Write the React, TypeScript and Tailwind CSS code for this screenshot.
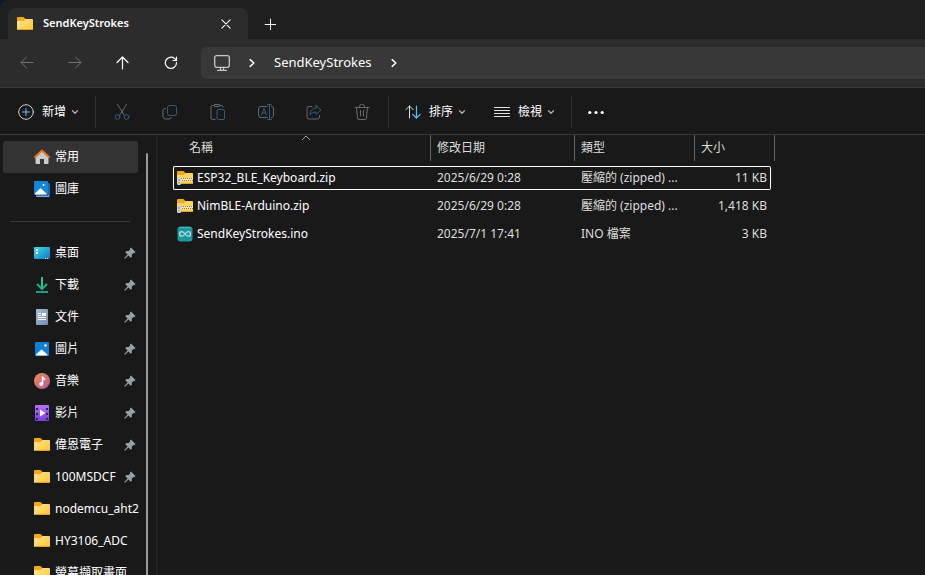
import type { ReactNode } from "react";

type IconProps = { className?: string };

/* ---------- Command icons ---------- */

function Svg({ children, className = "size-4" }: { children: ReactNode; className?: string }) {
  return (
    <svg
      viewBox="0 0 16 16"
      className={`shrink-0 ${className}`}
      fill="none"
      stroke="currentColor"
      strokeLinecap="round"
      strokeLinejoin="round"
      aria-hidden="true"
    >
      {children}
    </svg>
  );
}

function ChevronDown() {
  return (
    <Svg className="size-2 text-[#b4b4b4]">
      <path d="M3 5.5l5 5 5-5" strokeWidth="2.4" />
    </Svg>
  );
}

function ChevronRight() {
  return (
    <Svg className="size-3">
      <path d="M5.5 3.5L10.5 8l-5 4.500" strokeWidth="1.9" />
    </Svg>
  );
}

function CutIcon() {
  return (
    <Svg>
      <path d="M3.500 .5l7 11M12.500 .5l-7 11" stroke="#6b6b6b" />
      <circle cx="3.500" cy="13" r="2.400" stroke="#2f5f7e" />
      <circle cx="12.500" cy="13" r="2.400" stroke="#2f5f7e" />
    </Svg>
  );
}

function CopyIcon() {
  return (
    <Svg>
      <path d="M3.500 4.500H3a2 2 0 0 0-2 2v6A2.500 2.500 0 0 0 3.500 15h4a1.500 1.500 0 0 0 1.500-1.500" stroke="#6b6b6b" />
      <rect x="5.500" y="1.500" width="9" height="10" rx="2" stroke="#2f5f7e" />
    </Svg>
  );
}

function PasteIcon() {
  return (
    <Svg>
      <path d="M4 1.500H2.500A1.500 1.500 0 0 0 1 3v11a1.500 1.500 0 0 0 1.500 1.500H5M10 1.500h1.500A1.500 1.500 0 0 1 13 3" stroke="#6b6b6b" />
      <rect x="4" y=".5" width="6" height="2" rx="1" stroke="#6b6b6b" />
      <rect x="7" y="5.500" width="7.500" height="10" rx="1.500" stroke="#2f5f7e" />
    </Svg>
  );
}

function RenameIcon() {
  return (
    <Svg>
      <path d="M9 2.500H3A2.500 2.500 0 0 0 .5 5v6A2.500 2.500 0 0 0 3 13.500h6M13.500 2.500a2 2 0 0 1 2 2.500v6a2 2 0 0 1-2 2.500" stroke="#6b6b6b" />
      <path d="M3.500 11L6 4.500 8.500 11M4.500 9h3M11.500 .5v15M9.500 .5h4M9.500 15.500h4" stroke="#2f5f7e" />
    </Svg>
  );
}

function ShareIcon() {
  return (
    <Svg>
      <path d="M6 2.500H3a2 2 0 0 0-2 2v8.500a2 2 0 0 0 2 2h8.500a2 2 0 0 0 2-2v-1.500" stroke="#6b6b6b" />
      <path d="M10 1.500l5 4.500-5 4.500V8C7 8 5 9 4 11c0-4 2-6.500 6-7z" stroke="#2f5f7e" />
    </Svg>
  );
}

function DeleteIcon() {
  return (
    <Svg>
      <path d="M1 3.500h14M5.500 3.500V2.500a2 2 0 0 1 2-2h1a2 2 0 0 1 2 2v1M2.500 3.500l1 10.500a1.500 1.500 0 0 0 1.500 1.500h6a1.500 1.500 0 0 0 1.500-1.500l1-10.500M6.500 6.500v5.500M9.500 6.500v5.500" stroke="#6b6b6b" />
    </Svg>
  );
}

/* ---------- Folder and file icons ---------- */

function FolderIcon({ className = "size-4" }: IconProps) {
  return (
    <svg viewBox="0 0 16 16" className={`shrink-0 ${className}`} aria-hidden="true">
      <defs>
        <linearGradient id="folder" x1="0" y1="0" x2="1" y2="1">
          <stop offset="0" stopColor="#ffe69c" />
          <stop offset="1" stopColor="#ffc52f" />
        </linearGradient>
      </defs>
      <path d="M0 2a1 1 0 0 1 1-1h5.500l2 2v3H0z" fill="#f6a90c" />
      <path d="M0 6a1 1 0 0 1 1-1h5.800L8.500 3H15a1 1 0 0 1 1 1v9a1 1 0 0 1-1 1H1a1 1 0 0 1-1-1z" fill="url(#folder)" />
      <path d="M.5 13.500h15" stroke="#e3a322" />
    </svg>
  );
}

function ZipIcon() {
  return (
    <svg viewBox="0 0 16 16" className="size-4 shrink-0" aria-hidden="true">
      <path d="M0 2a1 1 0 0 1 1-1h5.500l2 2v3H0z" fill="#f6a90c" />
      <path d="M0 6a1 1 0 0 1 1-1h5.800L8.500 3H15a1 1 0 0 1 1 1v9a1 1 0 0 1-1 1H1a1 1 0 0 1-1-1z" fill="#ffd45c" />
      <path d="M4 13.500h11.500" stroke="#e3a322" />
      <path d="M3 8h13v3H3z" fill="#f3e6bd" />
      <path d="M4 8.500h12M5 10.500h11" stroke="#857a62" strokeDasharray="1 1" />
      <path d="M0 8h4v5.500a1.500 1.500 0 0 1-1.500 1.500h-1A1.500 1.500 0 0 1 0 13.500z" fill="#d7d7d7" />
      <path d="M2 9v2M2 12v1.500" stroke="#777" />
    </svg>
  );
}

function InoIcon() {
  return (
    <svg viewBox="0 0 16 16" className="size-4 shrink-0" aria-hidden="true">
      <rect x=".5" y=".5" width="15" height="15" rx="3" fill="#1f989c" />
      <path d="M2.500 1.500h11" stroke="#4cb9bb" strokeLinecap="round" />
      <path d="M8 8C6.800 6.400 6 5.600 4.800 5.600a2.300 2.300 0 0 0 0 4.600C6 10.200 6.800 9.600 8 8s2-2.400 3.200-2.400a2.300 2.300 0 0 1 0 4.600C10 10.200 9.200 9.600 8 8z" fill="none" stroke="#b5e3e3" strokeWidth="1.200" />
    </svg>
  );
}

function HomeIcon() {
  return (
    <svg viewBox="0 0 16 16" className="size-4 shrink-0" aria-hidden="true">
      <path d="M1.500 7.500L8 2l6.500 5.500V14a1 1 0 0 1-1 1H10V10H6v5H2.500a1 1 0 0 1-1-1z" fill="#c9c9c9" />
      <path d="M1 8l7-6.500L15 8" fill="none" stroke="#e2701d" strokeWidth="2" strokeLinecap="round" strokeLinejoin="round" />
    </svg>
  );
}

function GalleryIcon() {
  return (
    <svg viewBox="0 0 16 16" className="size-4 shrink-0" aria-hidden="true">
      <path d="M15 2a1 1 0 0 1 1 1v12a1 1 0 0 1-1 1h-1V2z" fill="#1a66b8" />
      <path d="M2 14.500h13V16H3a1 1 0 0 1-1-1z" fill="#7db3ea" />
      <rect width="14" height="14" rx="1" fill="#1585d8" />
      <path d="M1 12.500L6.500 7l6 5.500c0 .5-.5 1-1 1H2c-.5 0-1-.5-1-1z" fill="#fff" />
      <circle cx="9.500" cy="4" r="1" fill="#fff" />
    </svg>
  );
}

function DesktopIcon() {
  return (
    <svg viewBox="0 0 16 16" className="size-4 shrink-0" aria-hidden="true">
      <defs>
        <linearGradient id="desktop" x1="0" y1="0" x2="1" y2="1">
          <stop offset="0" stopColor="#3fe0ea" />
          <stop offset="1" stopColor="#1272c4" />
        </linearGradient>
      </defs>
      <rect y="2" width="16" height="12" rx="1" fill="url(#desktop)" />
      <path d="M2 5h2M2 8h2" stroke="#fff" strokeWidth="2" />
      <path d="M11 13.500h1M13 13.500h1" stroke="#d5ecff" />
    </svg>
  );
}

function DownloadIcon() {
  return (
    <svg viewBox="0 0 16 16" className="size-4 shrink-0" fill="none" aria-hidden="true">
      <path d="M8 0v12" stroke="#2bc08e" strokeWidth="2" />
      <path d="M3 7l5 5 5-5" stroke="#1fae90" strokeWidth="2" />
      <path d="M2 15h12" stroke="#17a08c" strokeWidth="2" />
    </svg>
  );
}

function DocumentIcon() {
  return (
    <svg viewBox="0 0 16 16" className="size-4 shrink-0" aria-hidden="true">
      <defs>
        <linearGradient id="document" x1="0" y1="0" x2="1" y2="1">
          <stop offset="0" stopColor="#a9c0d6" />
          <stop offset="1" stopColor="#6f8dac" />
        </linearGradient>
      </defs>
      <rect x="2" width="12" height="16" rx="1" fill="url(#document)" />
      <path d="M4 4.500h3M4 6.500h3M4 8.500h8M4 10.500h8" stroke="#fff" />
      <path d="M8 4h4v3H8z" fill="#fff" />
    </svg>
  );
}

function PictureIcon() {
  return (
    <svg viewBox="0 0 16 16" className="size-4 shrink-0" aria-hidden="true">
      <rect x="1" y="1" width="14" height="14" rx="1" fill="#1180d4" />
      <path d="M2 13.500L7.500 8.500l6 5c0 .5-.5 1-1 1H3c-.5 0-1-.5-1-1z" fill="#fff" />
      <circle cx="11.500" cy="4.500" r="1.200" fill="#fff" />
    </svg>
  );
}

function MusicIcon() {
  return (
    <svg viewBox="0 0 16 16" className="size-4 shrink-0" aria-hidden="true">
      <defs>
        <linearGradient id="music" x1="0" y1="0" x2="1" y2="1">
          <stop offset="0" stopColor="#f08a54" />
          <stop offset="1" stopColor="#b45a9c" />
        </linearGradient>
      </defs>
      <circle cx="8" cy="8" r="8" fill="url(#music)" />
      <path d="M8.500 3.500V11" stroke="#fff" strokeWidth="1.500" />
      <path d="M8.500 4c.5 1.500 2 1.500 2 3" stroke="#fff" strokeWidth="1.500" fill="none" />
      <circle cx="7.300" cy="11" r="1.900" fill="#fff" />
    </svg>
  );
}

function VideoIcon() {
  return (
    <svg viewBox="0 0 16 16" className="size-4 shrink-0" aria-hidden="true">
      <defs>
        <linearGradient id="video" x1="0" y1="0" x2="0" y2="1">
          <stop offset="0" stopColor="#b072f5" />
          <stop offset="1" stopColor="#7b3fd6" />
        </linearGradient>
      </defs>
      <rect x="1" y="0" width="14" height="16" rx="1" fill="url(#video)" />
      <path d="M3 3v12M13 3v12" stroke="#3b1470" strokeWidth="2" strokeDasharray="2 3" />
      <path d="M6 4.500l5.500 3.500L6 11.500z" fill="#fff" />
    </svg>
  );
}

function PinIcon() {
  return (
    <svg viewBox="0 0 12 12" className="size-3 shrink-0" aria-hidden="true">
      <path d="M7 .5L11.500 5l-.9 1-1-.1L7.700 7.800l.2 2-1.100 1L4.400 8.400 1 11.800l-.8-.8L3.600 7.600 1.200 5.200l1.100-1.100 2 .2L6.100 2.500 6 1.500z" fill="#98a1a8" />
    </svg>
  );
}

/* ---------- Data ---------- */

const places = [
  { name: "桌面", icon: <DesktopIcon />, pinned: true },
  { name: "下載", icon: <DownloadIcon />, pinned: true },
  { name: "文件", icon: <DocumentIcon />, pinned: true },
  { name: "圖片", icon: <PictureIcon />, pinned: true },
  { name: "音樂", icon: <MusicIcon />, pinned: true },
  { name: "影片", icon: <VideoIcon />, pinned: true },
  { name: "偉恩電子", icon: <FolderIcon />, pinned: true },
  { name: "100MSDCF", icon: <FolderIcon />, pinned: true },
  { name: "nodemcu_aht2", icon: <FolderIcon />, pinned: false },
  { name: "HY3106_ADC", icon: <FolderIcon />, pinned: false },
  { name: "螢幕擷取畫面", icon: <FolderIcon />, pinned: false },
];

const files = [
  { name: "ESP32_BLE_Keyboard.zip", date: "2025/6/29 0:28", type: "壓縮的 (zipped) ...", size: "11 KB", icon: <ZipIcon />, focused: true },
  { name: "NimBLE-Arduino.zip", date: "2025/6/29 0:28", type: "壓縮的 (zipped) ...", size: "1,418 KB", icon: <ZipIcon />, focused: false },
  { name: "SendKeyStrokes.ino", date: "2025/7/1 17:41", type: "INO 檔案", size: "3 KB", icon: <InoIcon />, focused: false },
];

const editCommands = [
  { label: "剪下", icon: <CutIcon /> },
  { label: "複製", icon: <CopyIcon /> },
  { label: "貼上", icon: <PasteIcon /> },
  { label: "重新命名", icon: <RenameIcon /> },
  { label: "共用", icon: <ShareIcon /> },
  { label: "刪除", icon: <DeleteIcon /> },
];

/* ---------- Layout ---------- */

function TabStrip() {
  return (
    <div className="flex h-[39px] items-end bg-[#202020] pl-2">
      <div className="flex h-[31px] w-60 items-center rounded-t-lg bg-[#2c2c2c] pr-3 pl-[9px]">
        <FolderIcon />
        <span className="ml-2.5 flex-1 text-[11px] font-semibold">SendKeyStrokes</span>
        <button aria-label="關閉索引標籤" className="flex size-5 items-center justify-center">
          <Svg className="size-3">
            <path d="M2.500 2.500l11 11M13.500 2.500l-11 11" strokeWidth="1.400" />
          </Svg>
        </button>
      </div>
      <button aria-label="新增索引標籤" className="ml-3 flex h-[31px] w-5 items-center justify-center">
        <Svg className="size-3">
          <path d="M8.700 1.500v14M1.500 8.700h14" strokeWidth="1.300" />
        </Svg>
      </button>
    </div>
  );
}

function NavButton({ label, disabled, children }: { label: string; disabled?: boolean; children: ReactNode }) {
  return (
    <button aria-label={label} disabled={disabled} className="flex h-8 w-12 items-center justify-center text-white disabled:text-[#747474]">
      <Svg>{children}</Svg>
    </button>
  );
}

function NavBar() {
  return (
    <div className="flex h-12 items-center bg-[#2c2c2c] pl-[3px]">
      <NavButton label="上一頁" disabled>
        <path d="M14 7.500H2M7.500 2L2 7.500 7.500 13" />
      </NavButton>
      <NavButton label="下一頁" disabled>
        <path d="M2 7.500h12M8.500 2L14 7.500 8.500 13" />
      </NavButton>
      <NavButton label="上移">
        <path d="M7.500 14V2M2 7.500L7.500 2 13 7.500" strokeWidth="1.200" />
      </NavButton>
      <NavButton label="重新整理">
        <path d="M13.500 7.500A5.600 5.600 0 1 1 11.500 3.500L13.500 5M13.500 2v3.500H10" strokeWidth="1.200" />
      </NavButton>
      <nav aria-label="位址" className="ml-1.5 flex h-8 flex-1 items-center rounded-l-md bg-[#383838] pl-[13px] text-[13px] text-white">
        <Svg className="size-4 text-[#c8c8c8]">
          <rect x=".7" y=".7" width="14.600" height="11.600" rx="2" strokeWidth="1.300" />
          <path d="M6.500 13v2M9.500 13v2M3.500 15.300h9" strokeWidth="1.200" />
        </Svg>
        <span className="ml-4">
          <ChevronRight />
        </span>
        <a href="#" className="mx-4">SendKeyStrokes</a>
        <ChevronRight />
      </nav>
    </div>
  );
}

function Divider() {
  return <div className="h-8 w-px shrink-0 bg-[#303030]" />;
}

function MenuButton({ label, icon }: { label: string; icon: ReactNode }) {
  return (
    <button className="flex items-center">
      {icon}
      <span className="mr-[5px] ml-2">{label}</span>
      <ChevronDown />
    </button>
  );
}

function CommandBar() {
  return (
    <div className="flex h-12 items-center border-t border-b border-[#3a3a3a] bg-[#191919] pt-0.5 pl-[18px] text-white">
      <MenuButton
        label="新增"
        icon={
          <Svg>
            <circle cx="8" cy="8" r="7.300" stroke="#d0d0d0" />
            <path d="M8 4.500v7M4.500 8h7" stroke="#5cc4f5" />
          </Svg>
        }
      />
      <div className="w-4" />
      <Divider />
      <div className="flex px-0.5">
        {editCommands.map((cmd) => (
          <button key={cmd.label} aria-label={cmd.label} disabled className="flex h-8 w-12 items-center justify-center">
            {cmd.icon}
          </button>
        ))}
      </div>
      <Divider />
      <div className="flex gap-7 px-4">
        <MenuButton
          label="排序"
          icon={
            <Svg>
              <path d="M4.500 14V2M.8 5.700L4.500 2l3.700 3.700" stroke="#e0e0e0" />
              <path d="M11.500 2v12M7.800 10.300l3.700 3.700 3.700-3.700" stroke="#4fc3ff" strokeWidth="1.200" />
            </Svg>
          }
        />
        <MenuButton
          label="檢視"
          icon={
            <Svg>
              <path d="M.5 3.500h15M.5 6.500h15M.5 9.500h15M.5 12.500h15" stroke="#e4e4e4" />
            </Svg>
          }
        />
      </div>
      <Divider />
      <button aria-label="更多" className="ml-4">
        <svg viewBox="0 0 16 16" className="size-4" fill="currentColor" aria-hidden="true">
          <circle cx="1.800" cy="8.500" r="1.600" />
          <circle cx="8" cy="8.500" r="1.600" />
          <circle cx="14.200" cy="8.500" r="1.600" />
        </svg>
      </button>
    </div>
  );
}

function PlaceLink({ name, icon, pinned, active }: { name: string; icon: ReactNode; pinned?: boolean; active?: boolean }) {
  return (
    <a
      href="#"
      className={`flex h-8 shrink-0 items-center pl-[31px] text-white ${active ? "rounded-xs bg-[#333333]" : ""}`}
    >
      {icon}
      <span className="ml-[5px] flex-1 whitespace-nowrap">{name}</span>
      {pinned && (
        <span className="mr-0.5">
          <PinIcon />
        </span>
      )}
    </a>
  );
}

function Sidebar() {
  return (
    <aside className="flex w-[158px] shrink-0 overflow-hidden border-r-2 border-[#222222] pt-1.5 pl-[3px]">
      <nav aria-label="快速存取" className="flex w-[135px] flex-col">
        <PlaceLink name="常用" icon={<HomeIcon />} active />
        <PlaceLink name="圖庫" icon={<GalleryIcon />} />
        <hr className="mt-4 mr-2 mb-[15px] ml-[7px] border-[#3a3a3a]" />
        {places.map((place) => (
          <PlaceLink key={place.name} {...place} />
        ))}
      </nav>
      <div className="mt-3 ml-2 w-0.5 rounded-t-full bg-[#9a9a9a]" />
    </aside>
  );
}

function FileTable() {
  return (
    <table className="w-[602px] table-fixed border-collapse text-left text-[#dedede]">
      <colgroup>
        <col className="w-[258px]" />
        <col className="w-36" />
        <col className="w-[120px]" />
        <col className="w-20" />
      </colgroup>
      <thead>
        <tr className="h-[27px] align-top leading-[26px]">
          <th className="relative p-0 font-normal">
            <div className="h-[26px] border-r border-[#636363] pl-4">名稱</div>
            <svg viewBox="0 0 10 6" className="absolute top-0 left-32 h-1.5 w-2.5" fill="none" stroke="#a0a0a0" aria-hidden="true">
              <path d="M1 5l4-4 4 4" />
            </svg>
          </th>
          <th className="p-0 font-normal">
            <div className="h-[26px] border-r border-[#636363] pl-1.5">修改日期</div>
          </th>
          <th className="p-0 font-normal">
            <div className="h-[26px] border-r border-[#636363] pl-1.5">類型</div>
          </th>
          <th className="p-0 font-normal">
            <div className="h-[26px] border-r border-[#636363] pl-1.5">大小</div>
          </th>
        </tr>
      </thead>
      <tbody className="leading-6">
        {files.map((file) => {
          const edge = file.focused ? "border-white" : "border-transparent";
          return (
            <tr key={file.name} className="h-7 align-bottom">
              <td className="p-0">
                <div className={`flex h-6 items-center rounded-l-xs border-y border-l pl-[3px] text-white ${edge}`}>
                  {file.icon}
                  <span className="ml-1">{file.name}</span>
                </div>
              </td>
              <td className="p-0">
                <div className={`flex h-6 items-center border-y pl-1.5 ${edge}`}>{file.date}</div>
              </td>
              <td className="p-0">
                <div className={`flex h-6 items-center border-y pl-1.5 whitespace-nowrap ${edge}`}>{file.type}</div>
              </td>
              <td className="p-0">
                <div className={`mr-1 flex h-6 items-center justify-end rounded-r-xs border-y border-r pr-[3px] ${edge}`}>{file.size}</div>
              </td>
            </tr>
          );
        })}
      </tbody>
    </table>
  );
}

export default function App() {
  return (
    <div className="h-screen bg-[#0b1730]">
      <div className="flex h-full flex-col overflow-hidden rounded-tl-lg bg-[#191919] font-['Noto_Sans','Noto_Sans_CJK_TC',sans-serif] text-xs text-white">
        <TabStrip />
        <NavBar />
        <CommandBar />
        <div className="flex min-h-0 flex-1">
          <Sidebar />
          <main className="flex-1 pl-[15px]">
            <FileTable />
          </main>
        </div>
      </div>
    </div>
  );
}
